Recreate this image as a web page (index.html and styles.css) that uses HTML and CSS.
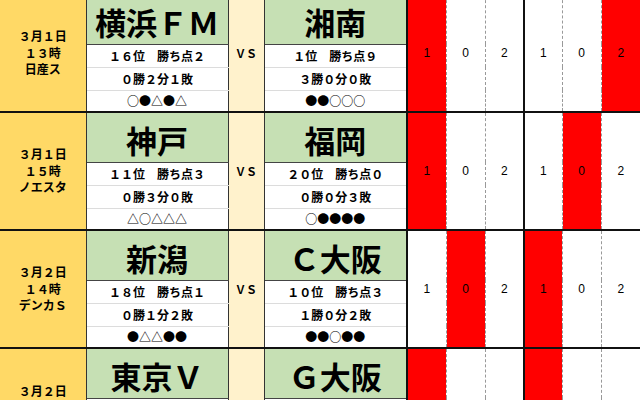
FILE: index.html
```html
<!DOCTYPE html>
<html lang="ja">
<head>
<meta charset="utf-8">
<title>試合予想表</title>
<link rel="stylesheet" href="styles.css">
</head>
<body>
<table class="sheet">
<colgroup>
<col class="c-date"><col class="c-team"><col class="c-vs"><col class="c-team2">
<col class="c-sc"><col class="c-sc"><col class="c-sc"><col class="c-sc4"><col class="c-sc"><col class="c-sc">
</colgroup>
<tbody>
<tr class="hd">
<td class="date" rowspan="4">３月１日<br>１３時<br>日産ス</td>
<td class="team ta">横浜ＦＭ</td>
<td class="vs" rowspan="4">ＶＳ</td>
<td class="team tb">湘南</td>
<td class="sc red" rowspan="4">1</td>
<td class="sc" rowspan="4">0</td>
<td class="sc mid" rowspan="4">2</td>
<td class="sc" rowspan="4">1</td>
<td class="sc" rowspan="4">0</td>
<td class="sc last red" rowspan="4">2</td>
</tr>
<tr class="s1"><td class="info ta">１６位　勝ち点２</td><td class="info tb">１位　勝ち点９</td></tr>
<tr class="s2"><td class="info ta">０勝２分１敗</td><td class="info tb">３勝０分０敗</td></tr>
<tr class="s3"><td class="info ta">○●△●△</td><td class="info tb">●●○○○</td></tr>

<tr class="hd">
<td class="date" rowspan="4">３月１日<br>１５時<br>ノエスタ</td>
<td class="team ta">神戸</td>
<td class="vs" rowspan="4">ＶＳ</td>
<td class="team tb">福岡</td>
<td class="sc red" rowspan="4">1</td>
<td class="sc" rowspan="4">0</td>
<td class="sc mid" rowspan="4">2</td>
<td class="sc" rowspan="4">1</td>
<td class="sc red" rowspan="4">0</td>
<td class="sc last" rowspan="4">2</td>
</tr>
<tr class="s1"><td class="info ta">１１位　勝ち点３</td><td class="info tb">２０位　勝ち点０</td></tr>
<tr class="s2"><td class="info ta">０勝３分０敗</td><td class="info tb">０勝０分３敗</td></tr>
<tr class="s3"><td class="info ta">△○△△△</td><td class="info tb">○●●●●</td></tr>

<tr class="hd">
<td class="date" rowspan="4">３月２日<br>１４時<br>デンカＳ</td>
<td class="team ta">新潟</td>
<td class="vs" rowspan="4">ＶＳ</td>
<td class="team tb">Ｃ大阪</td>
<td class="sc" rowspan="4">1</td>
<td class="sc red" rowspan="4">0</td>
<td class="sc mid" rowspan="4">2</td>
<td class="sc red" rowspan="4">1</td>
<td class="sc" rowspan="4">0</td>
<td class="sc last" rowspan="4">2</td>
</tr>
<tr class="s1"><td class="info ta">１８位　勝ち点１</td><td class="info tb">１０位　勝ち点３</td></tr>
<tr class="s2"><td class="info ta">０勝１分２敗</td><td class="info tb">１勝０分２敗</td></tr>
<tr class="s3"><td class="info ta">●△△●●</td><td class="info tb">●●○●●</td></tr>

<tr class="hd">
<td class="date" rowspan="4">３月２日<br>１４時<br>味スタ</td>
<td class="team ta">東京Ｖ</td>
<td class="vs" rowspan="4">ＶＳ</td>
<td class="team tb">Ｇ大阪</td>
<td class="sc red" rowspan="4">1</td>
<td class="sc" rowspan="4">0</td>
<td class="sc mid" rowspan="4">2</td>
<td class="sc red" rowspan="4">1</td>
<td class="sc" rowspan="4">0</td>
<td class="sc last" rowspan="4">2</td>
</tr>
<tr class="s1"><td class="info ta">１２位　勝ち点３</td><td class="info tb">１５位　勝ち点１</td></tr>
<tr class="s2"><td class="info ta">１勝０分２敗</td><td class="info tb">０勝１分２敗</td></tr>
<tr class="s3"><td class="info ta">●○●●●</td><td class="info tb">△●●△●</td></tr>
</tbody>
</table>
</body>
</html>
```
FILE: styles.css
```css
html, body {
  margin: 0;
  padding: 0;
  background: #ffffff;
}
body {
  width: 640px;
  height: 400px;
  overflow: hidden;
  font-family: "Noto Sans CJK JP", "Liberation Sans", sans-serif;
  color: #000;
}
.sheet {
  width: 640px;
  margin-top: -7px;
  border-collapse: collapse;
  table-layout: fixed;
}
.c-date { width: 86px; }
.c-team { width: 142px; }
.c-vs { width: 36px; }
.c-team2 { width: 143px; }
.c-sc { width: 39px; }
.c-sc4 { width: 38px; }

.sheet td {
  padding: 0;
  text-align: center;
  vertical-align: middle;
  white-space: nowrap;
  overflow: hidden;
}
.hd { height: 50px; }
.s1 { height: 23px; }
.s2 { height: 23px; }
.s3 { height: 22px; }

.hd td { border-top: 2px solid #111; }

.date {
  background: #ffd966;
  border-right: 1px solid #333;
  font-size: 12px;
  font-weight: 700;
  line-height: 16.5px;
}
.team {
  background: #c6e0b4;
  font-size: 31px;
  font-weight: 700;
  line-height: 1;
  padding-top: 4px !important;
  border-bottom: 1px solid #444;
}
.info {
  background: #fff;
  font-size: 12px;
  font-weight: 700;
  line-height: 1;
  border-bottom: 1px solid #dcdcdc;
}
.s3 .info { border-bottom: none; }
.ta { border-right: 1px solid #333; }
.tb { border-right: 2px solid #111; }
.vs {
  background: #fff2cc;
  font-size: 11px;
  font-weight: 700;
  border-right: 1px solid #333;
}
.sc {
  font-family: "Liberation Sans", Arial, sans-serif;
  font-size: 12px;
  background: #fff;
  border-right: 1px dashed #999;
}
.sc.mid { border-right: 2px solid #111; }
.sc.last { border-right: none; }
.sc.red { background: #ff0000; }
```
